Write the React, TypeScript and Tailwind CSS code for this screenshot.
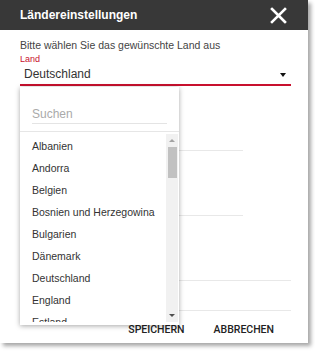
import React from "react";

const countries = [
  "Albanien",
  "Andorra",
  "Belgien",
  "Bosnien und Herzegowina",
  "Bulgarien",
  "Dänemark",
  "Deutschland",
  "England",
  "Estland",
];

function CloseIcon() {
  return (
    <svg width="17" height="17" viewBox="0 0 17 17" className="block">
      <path d="M2 2 L15 15 M15 2 L2 15" stroke="#fff" strokeWidth="2.6" strokeLinecap="square" />
    </svg>
  );
}

function CountryPopup() {
  return (
    <div className="absolute left-[20px] top-[87px] w-[159px] h-[238px] bg-white shadow-[0_1px_5px_rgba(0,0,0,0.35)] flex flex-col pb-[3px]">
      {/* Search */}
      <div className="h-[44px] px-[12px] pt-[17px]">
        <div className="h-[20px] border-b border-[#e4e4e4] text-[12px] leading-[20px] text-[#aaa]">Suchen</div>
      </div>
      <div className="h-px bg-[#e6e6e6]" />

      {/* List + scrollbar */}
      <div className="flex flex-1 min-h-0">
        <div className="flex-1 overflow-hidden pt-[3px] pl-[12px]">
          {countries.map((c) => (
            <div key={c} className="h-[22px] leading-[22px] text-[10.5px] text-[#333] whitespace-nowrap">
              {c}
            </div>
          ))}
        </div>
        <div className="w-[12px] mr-px mt-[2px] bg-[#f1f1f1] flex flex-col items-center">
          <div className="pt-[5px] h-[13px]">
            <div className="w-0 h-0 border-l-[3px] border-r-[3px] border-b-[3px] border-l-transparent border-r-transparent border-b-[#a3a3a3]" />
          </div>
          <div className="w-[9px] h-[31px] bg-[#c1c1c1]" />
          <div className="flex-1" />
          <div className="h-[13px] pt-[5px]">
            <div className="w-0 h-0 border-l-[3px] border-r-[3px] border-t-[3px] border-l-transparent border-r-transparent border-t-[#505050]" />
          </div>
        </div>
      </div>
    </div>
  );
}

export default function App() {
  return (
    <div className="w-[315px] h-[356px] bg-white" style={{ fontFamily: '"Liberation Sans", Arial, sans-serif' }}>
      <div className="relative w-[308px] h-[343px] bg-white shadow-[3px_3px_4px_rgba(0,0,0,0.35)] flex flex-col">
        {/* Header */}
        <div className="h-[30px] bg-[#383838] flex items-center justify-between pl-[20px] pr-[21px]">
          <span className="text-white text-[12px] font-bold">Ländereinstellungen</span>
          <CloseIcon />
        </div>

        {/* Body */}
        <div className="pl-[20px] pr-[17px] flex flex-col">
          <p className="mt-[9px] text-[10.5px] leading-[13px] text-[#444]">Bitte wählen Sie das gewünschte Land aus</p>
          <span className="mt-[2px] text-[9px] leading-[11px] text-[#c8102e]">Land</span>
          <div className="h-[21px] border-b-2 border-[#c8102e] flex items-center justify-between pl-[4px] pr-[5px]">
            <span className="text-[12px] text-[#333] pb-[2px]">Deutschland</span>
            <div className="w-0 h-0 border-l-[3px] border-r-[3px] border-t-[4px] border-l-transparent border-r-transparent border-t-[#111]" />
          </div>

          {/* Fields hidden behind popup */}
          <div className="mt-[64px] w-[223px] h-px bg-[#e8e8e8]" />
          <div className="mt-[64px] w-[223px] h-px bg-[#e8e8e8]" />
          <div className="mt-[64px] h-px bg-[#e8e8e8]" />
          <div className="mt-[29px] h-px bg-[#e8e8e8]" />
        </div>

        {/* Actions */}
        <div className="flex justify-end items-center gap-[29px] pr-[34px] mt-[11px]" style={{ fontFamily: "Roboto, sans-serif" }}>
          <span className="text-[10.5px] font-medium text-[#222]">SPEICHERN</span>
          <span className="text-[10.5px] font-medium text-[#222]">ABBRECHEN</span>
        </div>

        <CountryPopup />
      </div>
    </div>
  );
}
